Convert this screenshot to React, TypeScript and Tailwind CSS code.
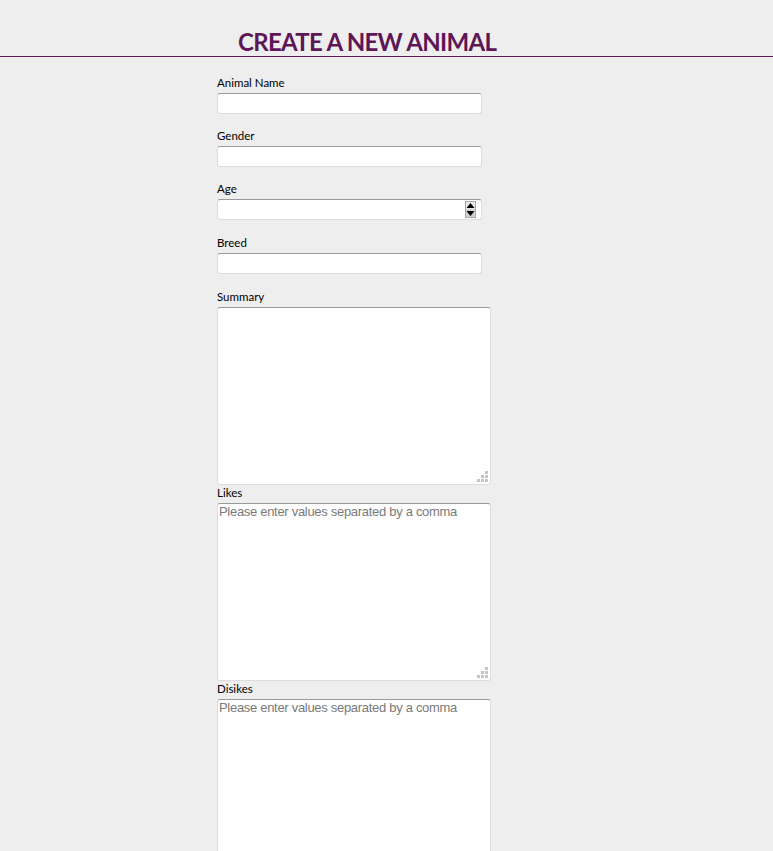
import React from "react";

const inputCls =
  "block w-[265px] h-[21px] bg-white rounded-[3px] border border-[#dcdcdc] border-t-[#9a9a9a] outline-none px-[2px] text-[13px]";
const areaCls =
  "block w-[274px] h-[178px] bg-white rounded-[3px] border border-[#dcdcdc] border-t-[#9a9a9a] outline-none px-[1px] pt-0 text-[13px] leading-[15px] tracking-[-0.3px] placeholder:text-[#7a7a7a] resize-none";

function Label({ children }: { children: React.ReactNode }) {
  return (
    <label className="block h-[14px] leading-[14px] text-[11.5px] text-black mb-[3px]">
      {children}
    </label>
  );
}

function Grip() {
  return (
    <svg
      className="absolute right-[3px] bottom-[3px]"
      width="11"
      height="11"
      viewBox="0 0 11 11"
    >
      <rect x="8" y="0" width="3" height="3" fill="#c4c4c4" />
      <rect x="4" y="4" width="3" height="3" fill="#c4c4c4" />
      <rect x="8" y="4" width="3" height="3" fill="#c4c4c4" />
      <rect x="0" y="8" width="3" height="3" fill="#c4c4c4" />
      <rect x="4" y="8" width="3" height="3" fill="#c4c4c4" />
      <rect x="8" y="8" width="3" height="3" fill="#c4c4c4" />
    </svg>
  );
}

function Area({ placeholder }: { placeholder?: string }) {
  return (
    <div className="relative w-[274px]">
      <textarea
        className={areaCls}
        placeholder={placeholder}
        style={{ fontFamily: "'Liberation Sans', Arial, sans-serif" }}
      />
      <Grip />
    </div>
  );
}

export default function App() {
  return (
    <div
      className="min-h-[851px] bg-[#eeeeee]"
      style={{ fontFamily: "Lato, 'Liberation Sans', sans-serif" }}
    >
      <div className="h-[57px] border-b border-[#5e1656] pl-[238px] pt-[27px]">
        <h1 className="text-[24px] leading-[30px] font-bold text-[#5e1656] tracking-[-0.7px]">
          CREATE A NEW ANIMAL
        </h1>
      </div>
      <form className="pl-[217px] pt-[19px]">
        <Label>Animal Name</Label>
        <input type="text" className={inputCls} />
        <div className="h-[15px]" />
        <Label>Gender</Label>
        <input type="text" className={inputCls} />
        <div className="h-[15px]" />
        <Label>Age</Label>
        <div className="relative w-[265px]">
          <input type="text" className={inputCls} />
          <div className="absolute left-[248px] top-[2px] w-[11px] h-[17px] bg-[#d6d6d6] border border-[#a9a9a9] flex flex-col">
            <svg width="9" height="15" viewBox="0 0 9 15">
              <rect x="0" y="0" width="9" height="7" fill="#e8e8e8" />
              <rect x="0" y="8" width="9" height="7" fill="#d0d0d0" />
              <polygon points="4.5,1 8.5,6 0.5,6" fill="#000" />
              <polygon points="0.5,9 8.5,9 4.5,14" fill="#000" />
            </svg>
          </div>
        </div>
        <div className="h-[16px]" />
        <Label>Breed</Label>
        <input type="text" className={inputCls} />
        <div className="h-[16px]" />
        <Label>Summary</Label>
        <Area />
        <div className="h-[1px]" />
        <Label>Likes</Label>
        <Area placeholder="Please enter values separated by a comma" />
        <div className="h-[1px]" />
        <Label>Disikes</Label>
        <Area placeholder="Please enter values separated by a comma" />
      </form>
    </div>
  );
}
